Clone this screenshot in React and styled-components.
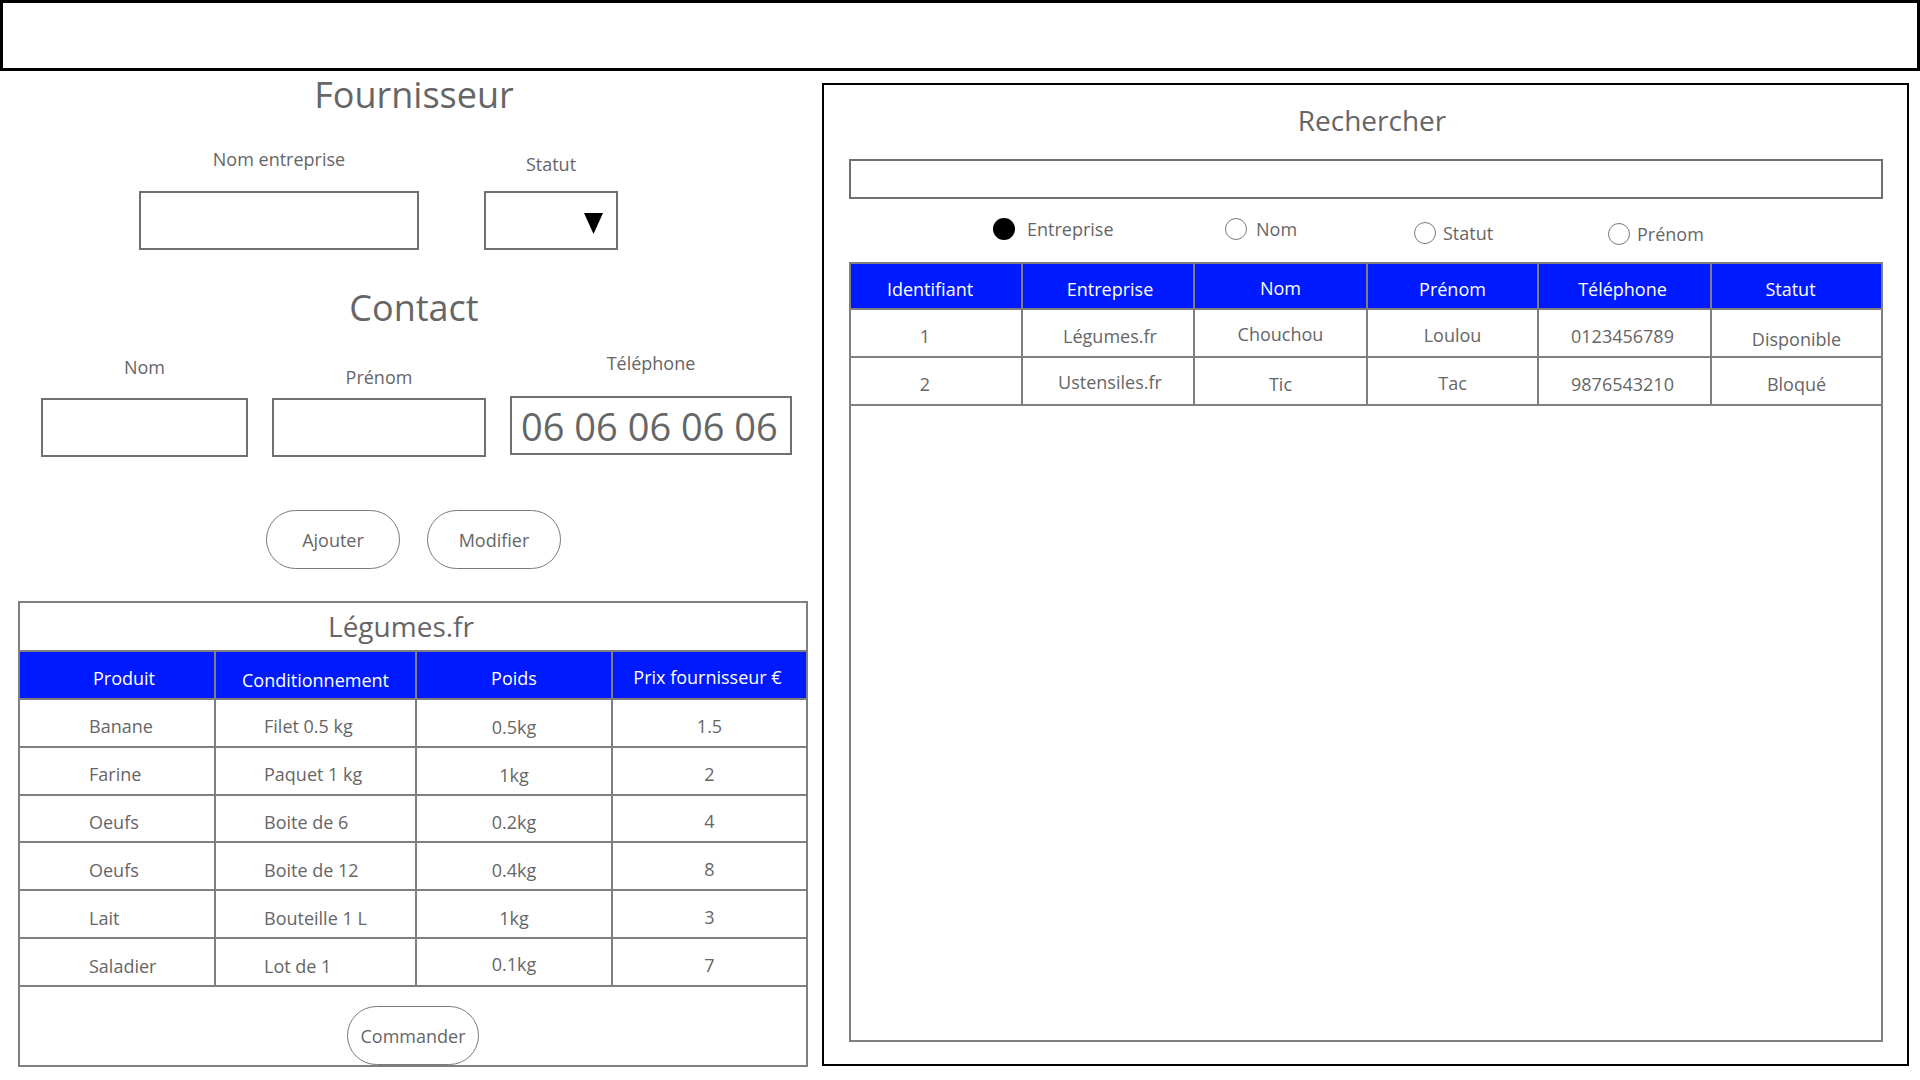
import React from 'react'
import styled, { createGlobalStyle } from 'styled-components'

const GlobalStyle = createGlobalStyle`
  html, body {
    margin: 0;
    padding: 0;
    background: #fff;
  }
  body {
    font-family: "Open Sans", "Noto Sans", sans-serif;
    color: #666;
  }
  * {
    box-sizing: border-box;
  }
`

const Page = styled.div`
  width: 1920px;
  height: 1080px;
  overflow: hidden;
  background: #fff;
`

const TopBar = styled.header`
  width: 1920px;
  height: 71px;
  border: 3px solid #000;
`

const Main = styled.div`
  display: flex;
  align-items: flex-start;
`

const LeftColumn = styled.section`
  width: 822px;
  display: flex;
  flex-direction: column;
`

const Title = styled.h1`
  margin: 0;
  height: ${p => p.$h}px;
  margin-top: ${p => p.$top || 0}px;
  padding-left: ${p => p.$shift || 0}px;
  padding-bottom: ${p => p.$pb || 0}px;
  display: flex;
  align-items: center;
  justify-content: center;
  font-size: ${p => p.$size}px;
  font-weight: 400;
  line-height: 1;
  color: #666;
`

const FormRow = styled.div`
  display: flex;
  align-items: flex-end;
  gap: ${p => p.$gap}px;
  padding-left: ${p => p.$left}px;
  margin-top: ${p => p.$top}px;
`

const Field = styled.div`
  display: flex;
  flex-direction: column;
  align-items: center;
  margin-bottom: ${p => p.$lift || 0}px;
`

const Label = styled.label`
  height: 24px;
  line-height: 24px;
  font-size: 18px;
  color: #666;
  margin-bottom: ${p => p.$gap}px;
`

const TextInput = styled.input`
  width: ${p => p.$w}px;
  height: 59px;
  border: 2px solid #707070;
  border-radius: 0;
  background: #fff;
  font: inherit;
  font-size: 38px;
  color: #666;
  padding: 0 0 0 9px;
  outline: none;
`

const Select = styled.div`
  width: 134px;
  height: 59px;
  border: 2px solid #707070;
  display: flex;
  align-items: center;
  justify-content: flex-end;
  padding: 6px 13px 0 0;
`

const ButtonRow = styled.div`
  display: flex;
  gap: 27px;
  padding-left: 266px;
  margin-top: 53px;
`

const PillButton = styled.button`
  width: ${p => p.$w}px;
  height: 59px;
  border: 1px solid #7a7a7a;
  border-radius: 30px;
  background: #fff;
  font: inherit;
  font-size: 18px;
  color: #666;
  padding: 0;
  margin-top: ${p => p.$top || 0}px;
`

const OrderBox = styled.div`
  margin: 32px 0 0 18px;
  width: 790px;
  height: 466px;
  border: 2px solid #7f7f7f;
  display: flex;
  flex-direction: column;
`

const BoxTitle = styled.div`
  height: 49px;
  border-bottom: 2px solid #7f7f7f;
  display: flex;
  align-items: center;
  justify-content: center;
  padding-right: 24px;
  font-size: 28px;
  color: #666;
`

const Row = styled.div`
  display: grid;
  grid-template-columns: ${p => p.$cols};
  height: ${p => p.$h || 48}px;
  border-bottom: 2px solid #7f7f7f;
  background: ${p => (p.$head ? '#001aff' : '#fff')};
`

const Cell = styled.div`
  display: flex;
  align-items: center;
  justify-content: ${p => (p.$pad ? 'flex-start' : 'center')};
  padding-left: ${p => p.$pad || 0}px;
  padding-top: ${p => p.$dy || 0}px;
  font-size: 18px;
  color: ${p => (p.$head ? '#fff' : '#666')};
  white-space: nowrap;
  & + & {
    border-left: 2px solid #7f7f7f;
  }
`

const CellText = styled.span`
  transform: translateX(${p => p.$dx || 0}px);
`

const OrderFooter = styled.div`
  flex: 1;
  display: flex;
  justify-content: center;
  align-items: flex-start;
`

const SearchPanel = styled.section`
  margin-top: 12px;
  width: 1087px;
  height: 983px;
  border: 2px solid #000;
  padding: 0 24px 0 25px;
  display: flex;
  flex-direction: column;
`

const SearchInput = styled.input`
  width: 100%;
  height: 40px;
  border: 2px solid #707070;
  border-radius: 0;
  background: #fff;
  outline: none;
  flex-shrink: 0;
`

const RadioGroup = styled.div`
  height: 63px;
  display: grid;
  grid-template-columns: 232px 189px 194px auto;
  align-items: start;
  padding: 18px 0 0 144px;
  flex-shrink: 0;
`

const RadioItem = styled.label`
  display: flex;
  align-items: center;
  gap: ${p => p.$gap}px;
  margin-top: ${p => p.$dy || 0}px;
  font-size: 18px;
  color: #666;
`

const RadioDot = styled.span`
  width: 22px;
  height: 22px;
  border-radius: 50%;
  border: ${p => (p.$on ? 'none' : '1.5px solid #7a7a7a')};
  background: ${p => (p.$on ? '#000' : '#fff')};
  flex-shrink: 0;
`

const ResultTable = styled.div`
  height: 780px;
  border: 2px solid #7f7f7f;
  flex-shrink: 0;
`

const products = [
  ['Banane', 'Filet 0.5 kg', '0.5kg', '1.5'],
  ['Farine', 'Paquet 1 kg', '1kg', '2'],
  ['Oeufs', 'Boite de 6', '0.2kg', '4'],
  ['Oeufs', 'Boite de 12', '0.4kg', '8'],
  ['Lait', 'Bouteille 1 L', '1kg', '3'],
  ['Saladier', 'Lot de 1', '0.1kg', '7'],
]

// each value: [text, vertical nudge (padding-top), horizontal nudge]
const suppliers = [
  [['1', 6, -11], ['Légumes.fr', 6, 2], ['Chouchou', 2, 0], ['Loulou', 4, 0], ['0123456789', 6, -2], ['Disponible', 12, 0]],
  [['2', 6, -11], ['Ustensiles.fr', 2, 2], ['Tic', 6, 0], ['Tac', 4, 0], ['9876543210', 6, -2], ['Bloqué', 6, 0]],
]

const supplierHead = [
  ['Identifiant', -6],
  ['Entreprise', 2],
  ['Nom', 0],
  ['Prénom', 0],
  ['Téléphone', -2],
  ['Statut', -6],
]

const productCols = '194px 201px 196px 195px'
const supplierCols = '170px 172px 173px 171px 173px 171px'

function App() {
  return (
    <Page>
      <GlobalStyle />
      <TopBar />
      <Main>
        <LeftColumn>
          <Title $h={48} $size={36} $shift={6}>Fournisseur</Title>

          <FormRow $gap={65} $left={139} $top={28}>
            <Field>
              <Label $gap={20}>Nom entreprise</Label>
              <TextInput $w={280} readOnly />
            </Field>
            <Field>
              <Label $gap={15}>Statut</Label>
              <Select>
                <svg width="19" height="21" viewBox="0 0 19 21">
                  <polygon points="0,0 19,0 9.5,21" fill="#000" />
                </svg>
              </Select>
            </Field>
          </FormRow>

          <Title $h={48} $size={36} $shift={6} $top={34}>Contact</Title>

          <FormRow $gap={24} $left={41} $top={19}>
            <Field>
              <Label $gap={19}>Nom</Label>
              <TextInput $w={207} readOnly />
            </Field>
            <Field>
              <Label $gap={9}>Prénom</Label>
              <TextInput $w={214} readOnly />
            </Field>
            <Field $lift={2}>
              <Label $gap={21}>Téléphone</Label>
              <TextInput $w={282} readOnly value="06 06 06 06 06" />
            </Field>
          </FormRow>

          <ButtonRow>
            <PillButton $w={134}>Ajouter</PillButton>
            <PillButton $w={134}>Modifier</PillButton>
          </ButtonRow>

          <OrderBox>
            <BoxTitle>Légumes.fr</BoxTitle>
            <Row $cols={productCols} $head>
              <Cell $head $dy={7}><CellText $dx={7}>Produit</CellText></Cell>
              <Cell $head $dy={10}>Conditionnement</Cell>
              <Cell $head $dy={7}>Poids</Cell>
              <Cell $head $dy={4}><CellText $dx={-2}>Prix fournisseur €</CellText></Cell>
            </Row>
            {products.map((p, i) => (
              <Row $cols={productCols} key={i}>
                <Cell $pad={69} $dy={7}>{p[0]}</Cell>
                <Cell $pad={48} $dy={7}>{p[1]}</Cell>
                <Cell $dy={i === 5 ? 4 : 8}>{p[2]}</Cell>
                <Cell $dy={i === 5 ? 5 : 6}>{p[3]}</Cell>
              </Row>
            ))}
            <OrderFooter>
              <PillButton $w={132} $top={19}>Commander</PillButton>
            </OrderFooter>
          </OrderBox>
        </LeftColumn>

        <SearchPanel>
          <Title $h={74} $size={28} $shift={12} $pb={5}>Rechercher</Title>
          <SearchInput readOnly />
          <RadioGroup>
            <RadioItem $gap={12}>
              <RadioDot $on />
              Entreprise
            </RadioItem>
            <RadioItem $gap={9}>
              <RadioDot />
              Nom
            </RadioItem>
            <RadioItem $gap={7} $dy={4}>
              <RadioDot />
              Statut
            </RadioItem>
            <RadioItem $gap={7} $dy={5}>
              <RadioDot />
              Prénom
            </RadioItem>
          </RadioGroup>
          <ResultTable>
            <Row $cols={supplierCols} $head $h={46}>
              {supplierHead.map(([t, dx], j) => (
                <Cell $head key={j} $dy={j === 2 ? 4 : 6}>
                  <CellText $dx={dx}>{t}</CellText>
                </Cell>
              ))}
            </Row>
            {suppliers.map((s, i) => (
              <Row $cols={supplierCols} key={i} $h={48}>
                {s.map(([v, dy, dx], j) => (
                  <Cell key={j} $dy={dy}>
                    <CellText $dx={dx}>{v}</CellText>
                  </Cell>
                ))}
              </Row>
            ))}
          </ResultTable>
        </SearchPanel>
      </Main>
    </Page>
  )
}

export default App
